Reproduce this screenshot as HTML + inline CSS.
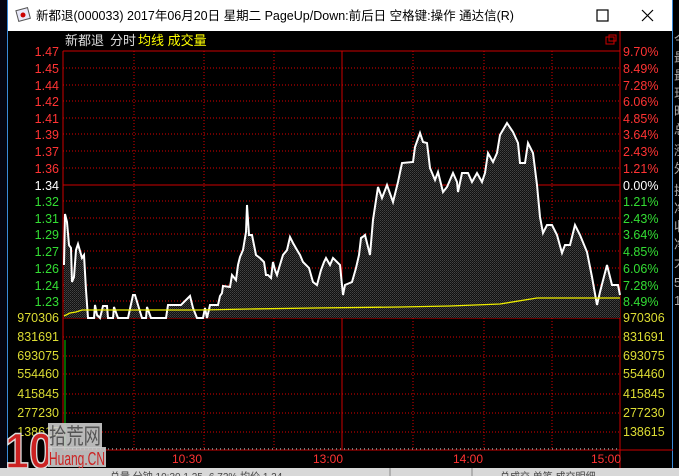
<!DOCTYPE html>
<html><head><meta charset="utf-8"><style>
html,body{margin:0;padding:0;background:#000;width:679px;height:476px;overflow:hidden}
svg{display:block}
text{font-family:"Liberation Sans","Noto Sans CJK SC",sans-serif}
</style></head><body>
<svg width="679" height="476" viewBox="0 0 679 476">
<defs>
<pattern id="h" width="2" height="2" patternUnits="userSpaceOnUse">
<rect width="2" height="2" fill="#111"/><rect width="1" height="1" fill="#444"/><rect x="1" y="1" width="1" height="1" fill="#333"/>
</pattern>
</defs>
<rect width="679" height="476" fill="#000"/>
<rect x="7" y="0" width="666" height="31" fill="#fff"/>
<rect x="0" y="0" width="7" height="476" fill="#050510"/>
<rect x="7" y="0" width="1" height="468" fill="#3a8ad8"/>
<rect x="672" y="0" width="1" height="468" fill="#3a8ad8"/>
<rect x="673" y="0" width="6" height="468" fill="#000"/>
<g transform="translate(17,8)"><rect x="0" y="1" width="12" height="11" fill="#e8e8f8" stroke="#555" transform="rotate(-15 6 6)"/><circle cx="6" cy="7" r="2.5" fill="#c00"/></g>
<text x="36" y="20" font-size="12.5" fill="#000">新都退(000033) 2017年06月20日 星期二 PageUp/Down:前后日 空格键:操作 通达信(R)</text>
<rect x="597" y="10" width="11" height="11" fill="none" stroke="#000" stroke-width="1.2"/>
<path d="M642 10 L653 21 M653 10 L642 21" stroke="#000" stroke-width="1.2"/>
<text x="65" y="45" font-size="13" fill="#ddd">新都退</text>
<text x="110" y="45" font-size="13" fill="#ddd">分时</text>
<text x="138" y="45" font-size="13" fill="#ff0">均线 成交量</text>
<rect x="606" y="37" width="8" height="7" fill="none" stroke="#c00"/><rect x="609" y="35" width="7" height="6" fill="none" stroke="#c00"/>
<g stroke="#d00" stroke-width="1" stroke-dasharray="1,2">
<path d="M63 68H620M63 85H620M63 101H620M63 118H620M63 134H620M63 151H620M63 168H620M63 201H620M63 218H620M63 234H620M63 251H620M63 268H620M63 285H620M63 301H620"/>
<path d="M63 337H620M63 356H620M63 374H620M63 394H620M63 413H620M63 432H620"/>
<path d="M134 51V450M204 51V450M274 51V450M413 51V450M484 51V450M552 51V450"/>
</g>
<g stroke="#c00" stroke-width="1" fill="none">
<path d="M63 51H620M63 185H620M63 318H620M63 450H673M63 51V450M342 51V450M620 31V468"/>
</g>
<path fill="url(#h)" d="M64 318 L64 265 L65 214 L67 222 L69 245 L71 248 L72 282 L74 277 L76 250 L78 244 L82 258 L84 255 L86 290 L88 318 L94 318 L95 305 L97 315 L100 318 L103 306 L107 306 L108 318 L113 318 L114 307 L118 318 L128 318 L133 295 L135 295 L138 305 L142 318 L146 318 L147 307 L151 318 L166 318 L168 305 L181 305 L190 296 L193 308 L197 318 L203 318 L205 308 L207 318 L210 305 L218 305 L220 296 L222 293 L223 286 L230 287 L232 275 L236 280 L238 265 L240 257 L243 250 L246 232 L247 205 L249 235 L252 235 L256 255 L260 258 L264 262 L266 275 L268 275 L271 278 L273 262 L275 270 L277 275 L279 268 L283 255 L287 250 L290 237 L293 243 L297 250 L300 255 L303 262 L306 265 L309 268 L313 282 L317 285 L321 270 L324 262 L326 258 L330 265 L333 258 L335 260 L340 265 L343 295 L345 285 L352 282 L356 268 L359 255 L361 238 L364 236 L365 235 L370 255 L373 220 L378 187 L382 198 L387 185 L393 202 L398 182 L402 163 L413 162 L415 147 L420 133 L423 142 L427 143 L430 168 L435 180 L438 172 L443 192 L447 187 L453 173 L457 182 L458 192 L462 173 L468 173 L472 182 L477 173 L482 182 L485 173 L488 153 L493 162 L497 153 L500 135 L507 123 L513 132 L518 143 L520 163 L525 163 L528 143 L533 153 L537 185 L540 217 L543 233 L547 225 L552 225 L557 235 L562 253 L565 245 L570 245 L575 225 L580 235 L587 252 L592 277 L597 305 L600 292 L607 265 L612 285 L618 285 L620 295 L620 318 Z"/>
<path fill="none" stroke="#fff" stroke-width="2" d="M64 265 L65 214 L67 222 L69 245 L71 248 L72 282 L74 277 L76 250 L78 244 L82 258 L84 255 L86 290 L88 318 L94 318 L95 305 L97 315 L100 318 L103 306 L107 306 L108 318 L113 318 L114 307 L118 318 L128 318 L133 295 L135 295 L138 305 L142 318 L146 318 L147 307 L151 318 L166 318 L168 305 L181 305 L190 296 L193 308 L197 318 L203 318 L205 308 L207 318 L210 305 L218 305 L220 296 L222 293 L223 286 L230 287 L232 275 L236 280 L238 265 L240 257 L243 250 L246 232 L247 205 L249 235 L252 235 L256 255 L260 258 L264 262 L266 275 L268 275 L271 278 L273 262 L275 270 L277 275 L279 268 L283 255 L287 250 L290 237 L293 243 L297 250 L300 255 L303 262 L306 265 L309 268 L313 282 L317 285 L321 270 L324 262 L326 258 L330 265 L333 258 L335 260 L340 265 L343 295 L345 285 L352 282 L356 268 L359 255 L361 238 L364 236 L365 235 L370 255 L373 220 L378 187 L382 198 L387 185 L393 202 L398 182 L402 163 L413 162 L415 147 L420 133 L423 142 L427 143 L430 168 L435 180 L438 172 L443 192 L447 187 L453 173 L457 182 L458 192 L462 173 L468 173 L472 182 L477 173 L482 182 L485 173 L488 153 L493 162 L497 153 L500 135 L507 123 L513 132 L518 143 L520 163 L525 163 L528 143 L533 153 L537 185 L540 217 L543 233 L547 225 L552 225 L557 235 L562 253 L565 245 L570 245 L575 225 L580 235 L587 252 L592 277 L597 305 L600 292 L607 265 L612 285 L618 285 L620 295"/>
<path fill="none" stroke="#ee0" stroke-width="1.3" d="M64 316 L70 313 L76 312 L82 310 L200 310 L250 309 L315 308 L400 307 L450 306 L500 304 L537 298 L620 298"/>
<path d="M64 449H620" stroke="#777" stroke-width="2" stroke-dasharray="1,3"/>
<path d="M65 340V450" stroke="#0c0"/>
<g font-size="12.5" text-anchor="end">
<g fill="#f33"><text x="59" y="56">1.47</text><text x="59" y="73">1.45</text><text x="59" y="90">1.44</text><text x="59" y="106">1.42</text><text x="59" y="123">1.41</text><text x="59" y="139">1.39</text><text x="59" y="156">1.37</text><text x="59" y="173">1.36</text></g>
<text x="59" y="190" fill="#fff">1.34</text>
<g fill="#3d3"><text x="59" y="206">1.32</text><text x="59" y="223">1.31</text><text x="59" y="239">1.29</text><text x="59" y="256">1.27</text><text x="59" y="273">1.26</text><text x="59" y="290">1.24</text><text x="59" y="306">1.23</text></g>
<g fill="#dd3"><text x="59" y="322">970306</text><text x="59" y="341">831691</text><text x="59" y="360">693075</text><text x="59" y="378">554460</text><text x="59" y="398">415845</text><text x="59" y="417">277230</text><text x="59" y="436">138615</text></g>
</g>
<g font-size="12.5">
<g fill="#f33"><text x="623" y="56">9.70%</text><text x="623" y="73">8.49%</text><text x="623" y="90">7.28%</text><text x="623" y="106">6.06%</text><text x="623" y="123">4.85%</text><text x="623" y="139">3.64%</text><text x="623" y="156">2.43%</text><text x="623" y="173">1.21%</text></g>
<text x="623" y="190" fill="#fff">0.00%</text>
<g fill="#3d3"><text x="623" y="206">1.21%</text><text x="623" y="223">2.43%</text><text x="623" y="239">3.64%</text><text x="623" y="256">4.85%</text><text x="623" y="273">6.06%</text><text x="623" y="290">7.28%</text><text x="623" y="306">8.49%</text></g>
<g fill="#dd3"><text x="623" y="322">970306</text><text x="623" y="341">831691</text><text x="623" y="360">693075</text><text x="623" y="378">554460</text><text x="623" y="398">415845</text><text x="623" y="417">277230</text><text x="623" y="436">138615</text></g>
</g>
<g font-size="12" fill="#f33"><text x="172" y="463">10:30</text><text x="313" y="463">13:00</text><text x="453" y="463">14:00</text><text x="591" y="463">15:00</text></g>
<g font-size="13" fill="#aaa"><text x="674" y="44">今</text><text x="674" y="62">最</text><text x="674" y="80">最</text><text x="674" y="98">现</text><text x="674" y="116">昨</text><text x="674" y="134">总</text><text x="674" y="155">涨</text><text x="674" y="173">外</text><text x="674" y="195">换</text><text x="674" y="213">净</text><text x="674" y="231">收</text><text x="674" y="249">净</text><text x="674" y="267">大</text><text x="674" y="287">5</text><text x="674" y="305">1</text></g>
<text x="5" y="468" font-size="50" font-weight="bold" fill="#c22" stroke="#ddd" stroke-width="1.5" textLength="48" lengthAdjust="spacingAndGlyphs">10</text>
<rect x="48" y="423" width="54" height="25" fill="#ccc" opacity="0.9"/>
<text x="49" y="444" font-size="22" fill="#555" textLength="52" lengthAdjust="spacingAndGlyphs">拾荒网</text>
<rect x="48" y="447" width="58" height="20" fill="#ccc" opacity="0.9"/>
<text x="49" y="465" font-size="18" fill="#c22" textLength="56" lengthAdjust="spacingAndGlyphs">Huang.CN</text>
<rect x="0" y="468" width="679" height="8" fill="#d8d8d8"/>
<g font-size="10" fill="#444"><text x="110" y="480">总量 分钟 10:30 1.25 -6.72% 均价 1.24</text><text x="500" y="480">总成交 单笔 成交明细</text></g>
<path d="M390 468V476M472 468V476" stroke="#888"/>
</svg>
</body></html>
